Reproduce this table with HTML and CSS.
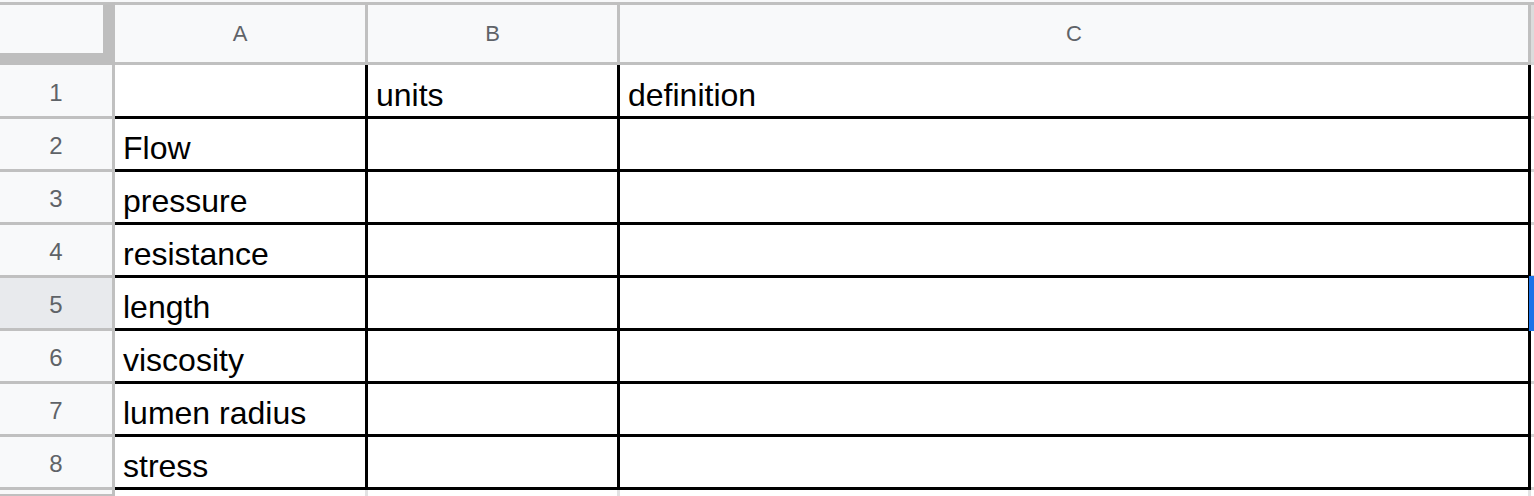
FILE: index.html
```html
<!DOCTYPE html>
<html>
<head>
    <title>Sheet</title>
    <link rel="stylesheet" href="styles.css">
</head>
<body>
    <div class="sheet">
        <div class="corner"></div>
        <div class="col-head">A</div>
        <div class="col-head">B</div>
        <div class="col-head last">C</div>
        <div class="col-head edge"></div>

        <div class="row-head first">1</div>
        <div class="cell first"></div>
        <div class="cell first">units</div>
        <div class="cell first">definition</div>
        <div class="edge first"></div>

        <div class="row-head">2</div>
        <div class="cell">Flow</div>
        <div class="cell"></div>
        <div class="cell"></div>
        <div class="edge"></div>

        <div class="row-head">3</div>
        <div class="cell">pressure</div>
        <div class="cell"></div>
        <div class="cell"></div>
        <div class="edge"></div>

        <div class="row-head">4</div>
        <div class="cell">resistance</div>
        <div class="cell"></div>
        <div class="cell"></div>
        <div class="edge"></div>

        <div class="row-head selected">5</div>
        <div class="cell">length</div>
        <div class="cell"></div>
        <div class="cell"></div>
        <div class="edge"><span class="marker"></span></div>

        <div class="row-head">6</div>
        <div class="cell">viscosity</div>
        <div class="cell"></div>
        <div class="cell"></div>
        <div class="edge"></div>

        <div class="row-head">7</div>
        <div class="cell">lumen radius</div>
        <div class="cell"></div>
        <div class="cell"></div>
        <div class="edge"></div>

        <div class="row-head">8</div>
        <div class="cell">stress</div>
        <div class="cell"></div>
        <div class="cell"></div>
        <div class="edge"></div>

        <!-- next row, cut off by the window -->
        <div class="row-head"></div>
        <div class="cell empty"></div>
        <div class="cell empty"></div>
        <div class="cell empty"></div>
        <div class="edge empty"></div>
    </div>
</body>
</html>
```

FILE: styles.css
```css
* { box-sizing: border-box; }
html, body { margin: 0; padding: 0; background: #fff; }
body { font-family: "Liberation Sans", Arial, sans-serif; overflow: hidden; }

.sheet {
    display: grid;
    grid-template-columns: 115px 253px 252px 911px 3px;
    grid-template-rows: 63px 54px repeat(7, 53px) 6px;
    padding-top: 2px;
    background: #f8f9fa;
    height: 496px;
}

.corner { background: #f8f9fa; border-top: 3px solid #c0c0c0; border-right: 12px solid #bebebe; border-bottom: 12px solid #bebebe; }

.col-head {
    background: #f8f9fa;
    border-top: 3px solid #c0c0c0;
    border-bottom: 3px solid #c0c0c0;
    border-right: 3px solid #c0c0c0;
    color: #5f6368;
    font-size: 22px;
    line-height: 1;
    display: flex;
    align-items: center;
    justify-content: center;
}
.col-head.edge { background: #dcdcdc; border-right: none; }

.row-head {
    background: #f8f9fa;
    border-right: 3px solid #c0c0c0;
    border-bottom: 3px solid #c0c0c0;
    color: #5f6368;
    font-size: 24px;
    line-height: 1;
    padding-top: 4px;
    display: flex;
    align-items: center;
    justify-content: center;
}
.row-head.selected { background: #e8eaed; }

.cell {
    background: #fff;
    border-right: 3px solid #000;
    border-bottom: 3px solid #000;
    color: #000;
    font-size: 32px;
    line-height: 1;
    padding: 0 0 5px 8px;
    display: flex;
    align-items: flex-end;
    white-space: nowrap;
}
.cell.empty { border-right-color: #e2e2e3; border-bottom: none; }

.edge { background: #fff; border-bottom: 3px solid #d4d4d4; position: relative; }
.edge.empty { border-bottom: none; }

.marker { position: absolute; left: -2px; top: -2px; width: 5px; height: 55px; background: #1a73e8; }
```
